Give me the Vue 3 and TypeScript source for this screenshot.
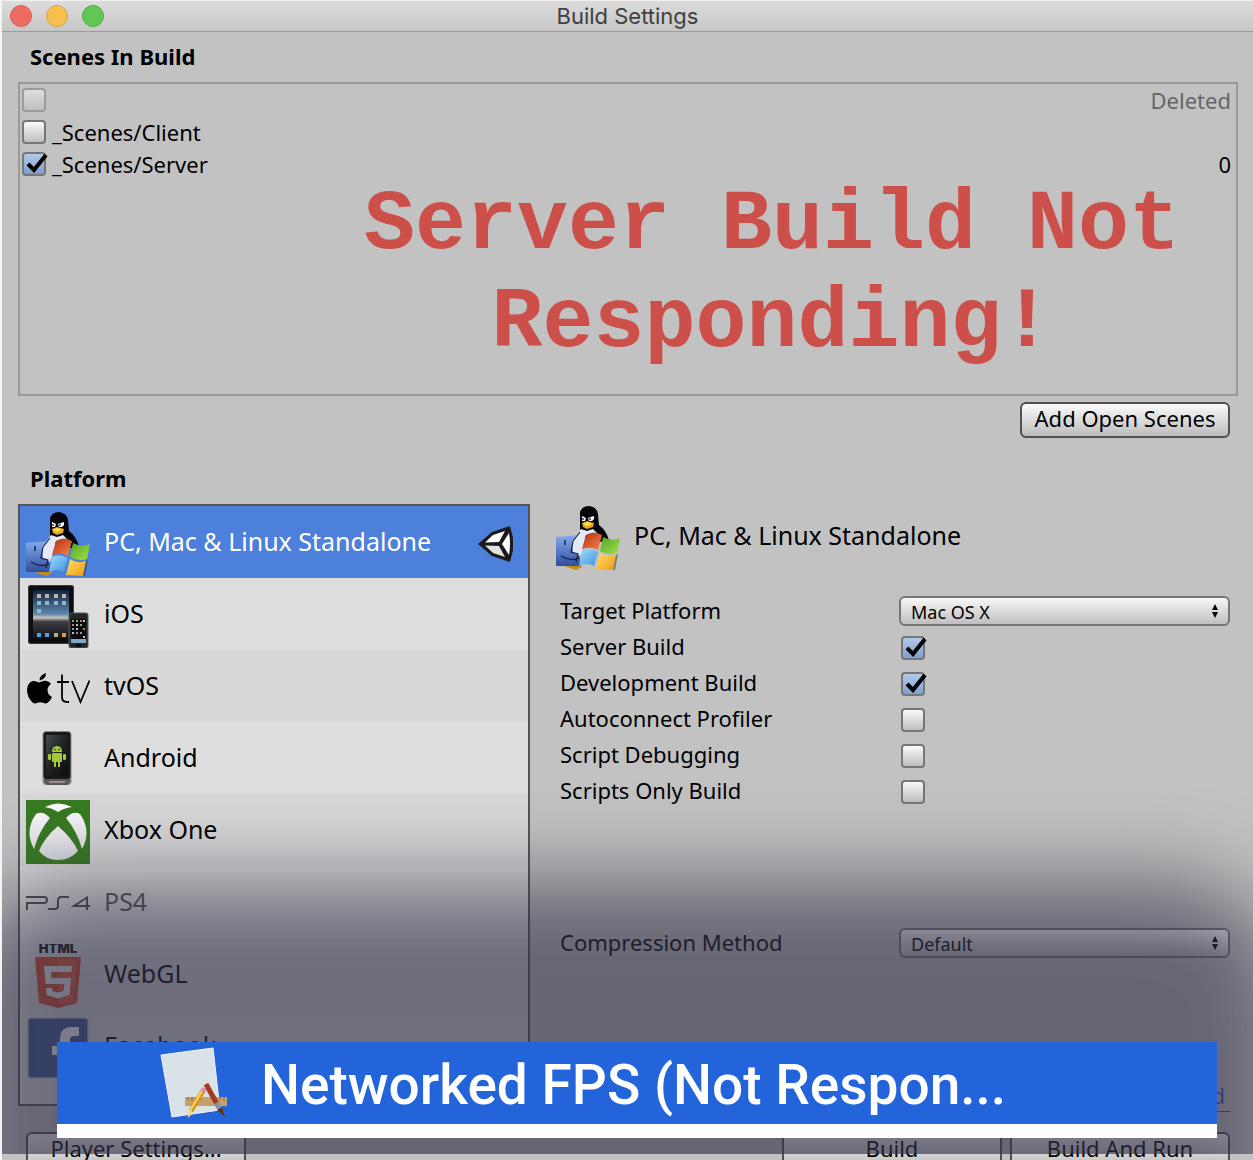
<script setup lang="ts">
import { ref } from 'vue'

interface Scene {
  path: string
  enabled: boolean
  deleted: boolean
  index: string
}

interface Platform {
  id: string
  name: string
  dimmed?: boolean
}

interface Option {
  id: string
  label: string
  on: boolean
}

const scenes = ref<Scene[]>([
  { path: '', enabled: false, deleted: true, index: 'Deleted' },
  { path: '_Scenes/Client', enabled: false, deleted: false, index: '' },
  { path: '_Scenes/Server', enabled: true, deleted: false, index: '0' },
])

const platforms: Platform[] = [
  { id: 'standalone', name: 'PC, Mac & Linux Standalone' },
  { id: 'ios', name: 'iOS' },
  { id: 'tvos', name: 'tvOS' },
  { id: 'android', name: 'Android' },
  { id: 'xbox', name: 'Xbox One' },
  { id: 'ps4', name: 'PS4', dimmed: true },
  { id: 'webgl', name: 'WebGL' },
  { id: 'facebook', name: 'Facebook' },
]

const selected = ref('standalone')

const options = ref<Option[]>([
  { id: 'server', label: 'Server Build', on: true },
  { id: 'development', label: 'Development Build', on: true },
  { id: 'profiler', label: 'Autoconnect Profiler', on: false },
  { id: 'debugging', label: 'Script Debugging', on: false },
  { id: 'scripts-only', label: 'Scripts Only Build', on: false },
])
</script>

<template>
  <svg class="symbols" aria-hidden="true">
    <defs>
      <linearGradient id="g-finder" x1="0" y1="0" x2="0" y2="1">
        <stop offset="0" stop-color="#86aaf0" /><stop offset="1" stop-color="#2f4f9c" />
      </linearGradient>
      <linearGradient id="g-red" x1="0" y1="0" x2="1" y2="1">
        <stop offset="0" stop-color="#b32a10" /><stop offset="1" stop-color="#f7884a" />
      </linearGradient>
      <linearGradient id="g-green" x1="0" y1="0" x2="1" y2="1">
        <stop offset="0" stop-color="#4fa524" /><stop offset="1" stop-color="#a5e04c" />
      </linearGradient>
      <linearGradient id="g-blue" x1="0" y1="0" x2="1" y2="1">
        <stop offset="0" stop-color="#a5dcff" /><stop offset="1" stop-color="#3a92de" />
      </linearGradient>
      <linearGradient id="g-yellow" x1="0" y1="0" x2="1" y2="1">
        <stop offset="0" stop-color="#ffe06a" /><stop offset="1" stop-color="#ee9a14" />
      </linearGradient>
      <linearGradient id="g-sky" x1="0" y1="0" x2="0" y2="1">
        <stop offset="0" stop-color="#10233c" /><stop offset="0.5" stop-color="#5c86ad" />
        <stop offset="0.58" stop-color="#c9c4b4" /><stop offset="0.66" stop-color="#3a3c42" />
        <stop offset="1" stop-color="#14161c" />
      </linearGradient>
      <linearGradient id="g-phone" x1="0" y1="0" x2="1" y2="1">
        <stop offset="0" stop-color="#4a4c50" /><stop offset="0.45" stop-color="#222326" />
        <stop offset="1" stop-color="#0c0c0e" />
      </linearGradient>
      <linearGradient id="g-orb" x1="0" y1="0" x2="0" y2="64" gradientUnits="userSpaceOnUse">
        <stop offset="0" stop-color="#ffffff" /><stop offset="1" stop-color="#dadae2" />
      </linearGradient>
    </defs>

    <symbol id="icon-standalone" viewBox="0 0 64 64">
      <path d="M6 59 L24 56 L26 61 L20 64 L14 62Z" fill="#c98a1c" />
      <path d="M0 31 L24 29 L24 60 L0 60Z" fill="url(#g-finder)" />
      <path d="M9 34v5M20 34v4" stroke="#17264f" stroke-width="1.5" />
      <path d="M5 50 q9 6 18 2" fill="none" stroke="#17264f" stroke-width="1.5" />
      <path d="M24 24 L24 6 Q26 0 33 0 Q41 1 42 8 L43 19 Q50 24 53 34 L44 36 L24 34Z" fill="#06060a" />
      <path d="M25 23 L31 25 L37 23 L41 27 L30 29 L27 42 L24 50 L17 46 L16 35Z" fill="#e4e9f8" />
      <path d="M24 26 L17 35 L15 46 L22 48 L20 56" fill="none" stroke="#15203e" stroke-width="1.2" />
      <path d="M26 10l4 2-1 3h-3zM32 12l6-2v3l-2 2h-3z" fill="#fff" />
      <path d="M27 12v2M34 12v2" stroke="#06060a" stroke-width="1.2" />
      <path d="M26 17 L31 15 L38 17 L37 21 L31 23 L27 21Z" fill="#e8a81e" />
      <path d="M27 18 L31 16 L36 18 L31 20Z" fill="#ffdf5c" />
      <path d="M30 29 Q38 24 46 29 L42 44 Q35 40 26 43Z" fill="url(#g-red)" />
      <path d="M47 31 Q56 36 64 32 L61 47 Q53 50 44 45Z" fill="url(#g-green)" />
      <path d="M26 45 Q34 41 42 46 L38 60 Q31 56 23 60Z" fill="url(#g-blue)" />
      <path d="M44 47 Q51 52 60 49 L57 64 L40 63Z" fill="url(#g-yellow)" />
      <path d="M60 49 L57 64 L59 64 L62 48Z" fill="#333" opacity="0.5" />
    </symbol>

    <symbol id="icon-ios" viewBox="0 0 64 64">
      <rect x="2" y="1" width="46" height="59" rx="3" fill="#0c0d10" />
      <rect x="2.500" y="1.500" width="45" height="58" rx="3" fill="none" stroke="#3c3d42" />
      <rect x="7" y="6" width="36" height="48" fill="url(#g-sky)" />
      <g fill="#c3b0a8">
        <rect x="11" y="10" width="4" height="4" /><rect x="19" y="10" width="4" height="4" />
        <rect x="28" y="10" width="4" height="4" /><rect x="36" y="10" width="4" height="4" />
      </g>
      <g fill="#8fb6cf">
        <rect x="11" y="17" width="4" height="4" /><rect x="19" y="17" width="4" height="4" />
        <rect x="28" y="17" width="4" height="4" /><rect x="36" y="17" width="4" height="4" />
        <rect x="11" y="25" width="4" height="4" />
      </g>
      <rect x="11" y="49" width="4" height="4" fill="#4aa5df" /><rect x="19" y="49" width="4" height="4" fill="#5c9be0" />
      <rect x="28" y="49" width="4" height="4" fill="#a8b86c" /><rect x="36" y="49" width="4" height="4" fill="#e0963c" />
      <rect x="43" y="29" width="19" height="35" rx="2" fill="#25272a" stroke="#55585c" />
      <rect x="45" y="35" width="15" height="24" fill="#0b0b0d" />
      <g fill="#7fae72">
        <rect x="46" y="36" width="2" height="2" /><rect x="50" y="36" width="2" height="2" /><rect x="54" y="40" width="2" height="2" />
        <rect x="46" y="44" width="2" height="2" /><rect x="54" y="48" width="2" height="2" />
      </g>
      <g fill="#c9766c">
        <rect x="54" y="36" width="2" height="2" /><rect x="46" y="40" width="2" height="2" /><rect x="57" y="44" width="2" height="2" />
        <rect x="50" y="48" width="2" height="2" />
      </g>
      <g fill="#b7c2d8">
        <rect x="57" y="36" width="2" height="2" /><rect x="50" y="40" width="2" height="2" /><rect x="50" y="44" width="2" height="2" />
        <rect x="46" y="48" width="2" height="2" /><rect x="57" y="52" width="2" height="2" />
      </g>
      <rect x="45" y="55" width="15" height="4" fill="#7fa9c9" />
      <rect x="50" y="60" width="5" height="3" rx="1" fill="#0b0b0d" />
    </symbol>

    <symbol id="icon-tvos" viewBox="0 0 64 64">
      <path d="M20 17 Q20 23 13.500 24.500 Q13.500 19 20 17Z" />
      <path d="M13.500 26.500 C16 25.500 18 24.500 20.500 25 Q23.500 25.500 25 28 Q21.500 30.500 21.500 34.500 Q22 39 26 41 Q24.500 44.500 22 46.500 Q20 48 17.500 47 Q14 45.500 11 47 Q8.500 48 6.500 46.500 Q1 41 1 33.500 Q1.500 26.500 7 25 C9.500 24.500 11.500 26 13.500 26.500Z" />
      <path d="M36 18.500 V41 Q36 46 41 46 H43 M31 26 H43" fill="none" stroke="#000" stroke-width="1.800" />
      <path d="M46 25 L54.500 46 L63.500 24.500" fill="none" stroke="#000" stroke-width="1.800" />
    </symbol>

    <symbol id="icon-android" viewBox="0 0 64 64">
      <rect x="16.500" y="3" width="29" height="54" rx="4" fill="#8d8785" />
      <rect x="17.500" y="4" width="27" height="47" rx="3" fill="#17181a" />
      <rect x="20" y="7" width="22" height="41" fill="url(#g-phone)" />
      <path d="M18 51h26v2q-1 4-4 4H22q-3 0-4-4z" fill="#5b5553" />
      <path d="M23 54h16" stroke="#a9a3a0" stroke-width="1.500" />
      <g fill="#a4c639">
        <path d="M26 24 Q26 18 31 18 Q36 18 36 24Z" />
        <rect x="26" y="25" width="10" height="9" rx="1" />
        <rect x="22" y="26" width="3" height="6" rx="1" /><rect x="37" y="26" width="3" height="6" rx="1" />
        <rect x="28" y="33" width="2" height="6" /><rect x="32" y="33" width="2" height="6" />
      </g>
      <circle cx="29" cy="21.500" r="0.800" fill="#17181a" /><circle cx="33" cy="21.500" r="0.800" fill="#17181a" />
    </symbol>

    <symbol id="icon-xbox" viewBox="0 0 64 64">
      <rect width="64" height="64" fill="#377a20" />
      <g fill="url(#g-orb)">
        <path d="M19 7 Q32 0 46 7 Q38 8 32 12 Q26 8 19 7Z" />
        <path d="M10 14 Q17 10 24 18 Q13 31 8 49 Q-2 31 10 14Z" />
        <path d="M54 14 Q47 10 40 18 Q51 31 56 49 Q66 31 54 14Z" />
        <path d="M32 26 Q46 38 52 51 Q44 60 32 60 Q20 60 13 51 Q18 38 32 26Z" />
      </g>
    </symbol>

    <symbol id="icon-ps4" viewBox="0 0 64 64">
      <path d="M0 25 H18 Q21 25 21 28 Q21 31 18 31 H1 V38 M22 37 H29 Q32 37 32 34 V29 Q32 25 35 25 H43 M61 38 V25.500 L48 34 H64" fill="none" stroke="#4c4c50" stroke-width="2" />
    </symbol>

    <symbol id="icon-webgl" viewBox="0 0 64 64">
      <text x="32" y="9" text-anchor="middle" font-family="Inter, sans-serif" font-weight="900" font-size="13" fill="#111">HTML</text>
      <path d="M9 13 H55 L51 59 L32 64 L13 59Z" fill="#d9482a" />
      <path d="M32 16 H51 L48 57 L32 61Z" fill="#e55a34" />
      <path d="M18 22 H46 L45.500 28 H25 L25.500 34 H45 L43.500 51 L32 54.500 L20.500 51 L20 44 H26 L26.500 47 L32 48.500 L37.500 47 L38.500 40 H19.500Z" fill="#ececec" />
    </symbol>

    <symbol id="icon-facebook" viewBox="0 0 64 64">
      <rect x="1" y="1" width="62" height="62" rx="3" fill="#c9cbd6" />
      <rect x="2.500" y="2.500" width="59" height="59" rx="2" fill="#3b5998" />
      <path d="M34 61 V39 H26 V30 H34 V23 Q34 11 46 11 H53 V20 H48 Q44 20 44 24 V30 H53 L52 39 H44 V61Z" fill="#fff" />
    </symbol>

    <symbol id="icon-unity" viewBox="0 0 36 36">
      <path d="M0 18 L14 6 L32 0 L35 12 V24 L32 36 L14 30Z" fill="#1b1b1d" />
      <path d="M7 16.500 L15 9 L27 5 L21 16Z" fill="#fff" />
      <path d="M7 19.500 L15 27 L27 31 L21 20Z" fill="#e2e2e2" />
      <path d="M24 18 L31 7 Q33 18 31 29Z" fill="#fff" />
    </symbol>
  </svg>

  <main class="window">
    <header class="titlebar">
      <div class="lights">
        <button class="light red" type="button" aria-label="Close"></button>
        <button class="light amber" type="button" aria-label="Minimise"></button>
        <button class="light green" type="button" aria-label="Zoom"></button>
      </div>
      <h1 class="title">Build Settings</h1>
    </header>

    <div class="content">
      <h2 class="heading">Scenes In Build</h2>
      <section class="scenes">
        <label v-for="(scene, i) in scenes" :key="i" class="scene" :class="{ deleted: scene.deleted }">
          <span class="check">
            <input v-model="scene.enabled" type="checkbox" :disabled="scene.deleted" />
            <svg v-if="scene.enabled" class="tick" viewBox="0 0 28 24"><path d="M6 12 L12 18 L24 3" /></svg>
          </span>
          <span class="scene-path">{{ scene.path }}</span>
          <span class="scene-index">{{ scene.index }}</span>
        </label>
        <p class="notice">Server Build Not<br />Responding!</p>
      </section>
      <div class="scene-actions">
        <button class="btn" type="button">Add Open Scenes</button>
      </div>

      <h2 class="heading platform-heading">Platform</h2>
      <div class="columns">
        <ul class="platforms">
          <li v-for="p in platforms" :key="p.id">
            <button
              class="platform"
              type="button"
              :class="{ selected: p.id === selected, dimmed: p.dimmed }"
              @click="selected = p.id"
            >
              <svg class="icon"><use :href="'#icon-' + p.id" /></svg>
              <span class="platform-name">{{ p.name }}</span>
              <svg v-if="p.id === 'standalone'" class="unity"><use href="#icon-unity" /></svg>
            </button>
          </li>
        </ul>

        <section class="settings">
          <div class="settings-head">
            <svg class="icon"><use href="#icon-standalone" /></svg>
            <h3 class="settings-title">PC, Mac &amp; Linux Standalone</h3>
          </div>
          <div class="field">
            <label class="label" for="target">Target Platform</label>
            <span class="select">
              <select id="target"><option>Mac OS X</option></select>
              <svg class="arrows" viewBox="0 0 6 14"><path d="M0 6 L3 0 L6 6Z M0 8 L3 14 L6 8Z" /></svg>
            </span>
          </div>
          <div v-for="o in options" :key="o.id" class="field">
            <label class="label" :for="o.id">{{ o.label }}</label>
            <span class="check">
              <input :id="o.id" v-model="o.on" type="checkbox" />
              <svg v-if="o.on" class="tick" viewBox="0 0 28 24"><path d="M6 12 L12 18 L24 3" /></svg>
            </span>
          </div>
          <div class="field compression">
            <label class="label" for="compression">Compression Method</label>
            <span class="select">
              <select id="compression"><option>Default</option></select>
              <svg class="arrows" viewBox="0 0 6 14"><path d="M0 6 L3 0 L6 6Z M0 8 L3 14 L6 8Z" /></svg>
            </span>
          </div>
          <a class="learn" href="#">Learn about Unity Cloud Build</a>
        </section>
      </div>

      <footer class="actions">
        <button class="btn wide" type="button">Player Settings...</button>
        <span class="spacer"></span>
        <button class="btn wide" type="button">Build</button>
        <button class="btn wide" type="button">Build And Run</button>
      </footer>
    </div>

    <div class="shade"><div class="shade-blur"></div></div>
    <aside class="process">
      <div class="process-row">
        <svg class="app-icon" viewBox="102 4 70 76">
          <path d="M104 15 L156 8 L164 70 L115 77Z" fill="#10337e" opacity="0.35" />
          <path d="M104 14 L156 7 L163 69 L115 76Z" fill="#d9e2e6" stroke="#f2f5f7" />
          <rect x="128" y="56" width="42" height="9" fill="#c9a06a" />
          <path d="M131 56v3M135 56v4M139 56v3M143 56v4M155 56v3M159 56v4M163 56v3M167 56v4" stroke="#8c6a3c" />
          <path d="M147 48 L134 70" stroke="#d99420" stroke-width="5" />
          <path d="M146 48 L133 70" stroke="#ffd75a" stroke-width="2" />
          <path d="M131 70 L136 72 L131 77Z" fill="#ecd3a4" />
          <path d="M145 48 l4 2" stroke="#d78cc0" stroke-width="4" />
          <path d="M149 43 L160 63" stroke="#a33a24" stroke-width="5" />
          <path d="M159 62 L163 68" stroke="#7f98a8" stroke-width="5" />
          <path d="M160 69 L165 66 L168 76Z" fill="#5b3a1c" />
        </svg>
        <span class="process-name">Networked FPS (Not Respon...</span>
      </div>
    </aside>
  </main>
</template>

<style>
body {
  margin: 0;
  background: #f4f4f4;
}
</style>

<style scoped>
.symbols {
  position: absolute;
  width: 0;
  height: 0;
}

.window {
  position: relative;
  box-sizing: border-box;
  height: 100vh;
  overflow: hidden;
  border-left: 2px solid #f4f4f4;
  background: #c2c2c2;
  color: #000;
  font: 22px/28px "Noto Sans", "Open Sans", sans-serif;
}

button,
select {
  font: inherit;
  color: inherit;
}

.titlebar {
  display: grid;
  grid-template-columns: 1fr auto 1fr;
  align-items: center;
  box-sizing: border-box;
  height: 32px;
  border-top: 1px solid #f2f2f2;
  border-bottom: 1px solid #9b9b9b;
  background: linear-gradient(#dcdcdc, #c6c6c6);
}

.lights {
  display: flex;
  gap: 14px;
  padding-left: 8px;
}

.light {
  box-sizing: border-box;
  width: 22px;
  height: 22px;
  padding: 0;
  border: 1px solid;
  border-radius: 50%;
}

.red {
  border-color: #da5a50;
  background: #ed6b60;
}

.amber {
  border-color: #dba63d;
  background: #f5c04f;
}

.green {
  border-color: #4fae40;
  background: #62c655;
}

.title {
  margin: 0;
  color: #404040;
  font: 400 22px/28px Inter, sans-serif;
}

.content {
  padding: 10px 15px 0 16px;
}

.heading {
  margin: 0 0 12px 12px;
  font-size: 22px;
  line-height: 28px;
  font-weight: 700;
}

.scenes {
  position: relative;
  box-sizing: border-box;
  height: 314px;
  border: 2px solid #999;
}

.scene {
  display: flex;
  align-items: center;
  gap: 6px;
  height: 32px;
  padding: 0 5px 0 2px;
}

.scene-path {
  flex: 1;
}

.deleted .scene-index {
  color: #666;
}

.check {
  position: relative;
  display: flex;
  width: 24px;
  height: 24px;
}

.check input {
  appearance: none;
  box-sizing: border-box;
  width: 24px;
  height: 24px;
  margin: 0;
  border: 2px solid #767676;
  border-radius: 4px;
  background: linear-gradient(#fafafa, #bfbdbf);
}

.check input:checked {
  background: linear-gradient(#b4c9e8, #7d9fd2);
}

.check input:disabled {
  opacity: 0.5;
}

.tick {
  position: absolute;
  top: 0;
  left: 0;
  width: 28px;
  height: 24px;
  fill: none;
  stroke: #000;
  stroke-width: 4;
  pointer-events: none;
}

.notice {
  position: absolute;
  top: 93px;
  right: 0;
  left: 288px;
  margin: 0;
  color: #cd4f49;
  font: 700 85px/98px "Courier New", "Liberation Mono", monospace;
  text-align: center;
  white-space: nowrap;
}

.scene-actions {
  display: flex;
  justify-content: flex-end;
  padding: 6px 8px 0 0;
}

.btn {
  box-sizing: border-box;
  height: 36px;
  min-width: 210px;
  padding: 0 8px 4px;
  border: 2px solid #505050;
  border-radius: 6px;
  background: linear-gradient(#fbfbfb, #bdbbbd);
  line-height: 28px;
  white-space: nowrap;
}

.wide {
  width: 220px;
}

.platform-heading {
  margin-top: 26px;
}

.columns {
  display: flex;
  gap: 26px;
}

.platforms {
  box-sizing: border-box;
  flex: 0 1 512px;
  height: 602px;
  margin: 0;
  padding: 0;
  border: 2px solid #555;
  background: #dedede;
  list-style: none;
}

.platforms li:nth-child(odd) .platform {
  background: #d8d8d8;
}

.platforms li:nth-child(even) .platform {
  background: #dedede;
}

.platform {
  display: flex;
  align-items: center;
  gap: 14px;
  box-sizing: border-box;
  width: 100%;
  height: 72px;
  padding: 6px 14px 2px 6px;
  border: 0;
  text-align: left;
}

.platforms li .platform.selected {
  background: #4d80da;
  color: #fff;
}

.platform-name {
  flex: 1;
  padding-bottom: 6px;
  font-size: 25px;
}

.dimmed .platform-name {
  color: #555;
}

.icon {
  flex: none;
  width: 64px;
  height: 64px;
}

.unity {
  width: 36px;
  height: 36px;
}

.settings {
  display: flex;
  flex: 1;
  flex-direction: column;
  padding: 2px 8px 0 0;
}

.settings-head {
  display: flex;
  align-items: center;
  gap: 14px;
  margin-bottom: 23px;
}

.settings-title {
  margin: 0;
  padding-bottom: 6px;
  font-size: 25px;
  line-height: 28px;
  font-weight: 400;
}

.field {
  display: flex;
  align-items: center;
  height: 36px;
}

.label {
  box-sizing: border-box;
  flex: 0 0 343px;
  padding: 0 0 2px 4px;
}

.field .check {
  margin: 2px 0 0 2px;
}

.select {
  position: relative;
  display: flex;
  flex: 1;
}

.select select {
  appearance: none;
  width: 100%;
  height: 30px;
  padding: 0 30px 2px 10px;
  border: 2px solid #767676;
  border-radius: 6px;
  background: linear-gradient(#f8f8f8, #c0bec0);
  font-size: 18px;
}

.arrows {
  position: absolute;
  top: 8px;
  right: 12px;
  width: 6px;
  height: 14px;
  pointer-events: none;
}

.compression {
  margin-top: 116px;
}

.learn {
  align-self: flex-end;
  margin-top: 120px;
  padding: 0 5px 2px;
  border-bottom: 1px solid #2a55c8;
  color: #2a55c8;
  text-decoration: none;
}

.actions {
  display: flex;
  gap: 8px;
  padding: 24px 8px 0;
}

.columns + .actions {
  padding-top: 20px;
}

.spacer {
  flex: 1;
}

.shade {
  position: absolute;
  top: 700px;
  right: 0;
  bottom: 6px;
  left: 0;
  overflow: hidden;
  pointer-events: none;
}

.shade-blur {
  position: absolute;
  top: 180px;
  right: -36px;
  bottom: -200px;
  left: -48px;
  border-radius: 120px;
  background: rgba(50, 48, 70, 0.64);
  filter: blur(42px);
}

.process {
  position: absolute;
  right: 36px;
  bottom: 22px;
  left: 55px;
  border-bottom: 14px solid #fff;
}

.process-row {
  display: flex;
  align-items: center;
  gap: 32px;
  box-sizing: border-box;
  height: 82px;
  padding-left: 102px;
  overflow: hidden;
  background: #2364da;
  color: #fff;
}

.app-icon {
  flex: none;
  width: 70px;
  height: 76px;
}

.process-name {
  padding-top: 4px;
  font: 500 55px/64px Roboto, sans-serif;
  white-space: nowrap;
}
</style>
